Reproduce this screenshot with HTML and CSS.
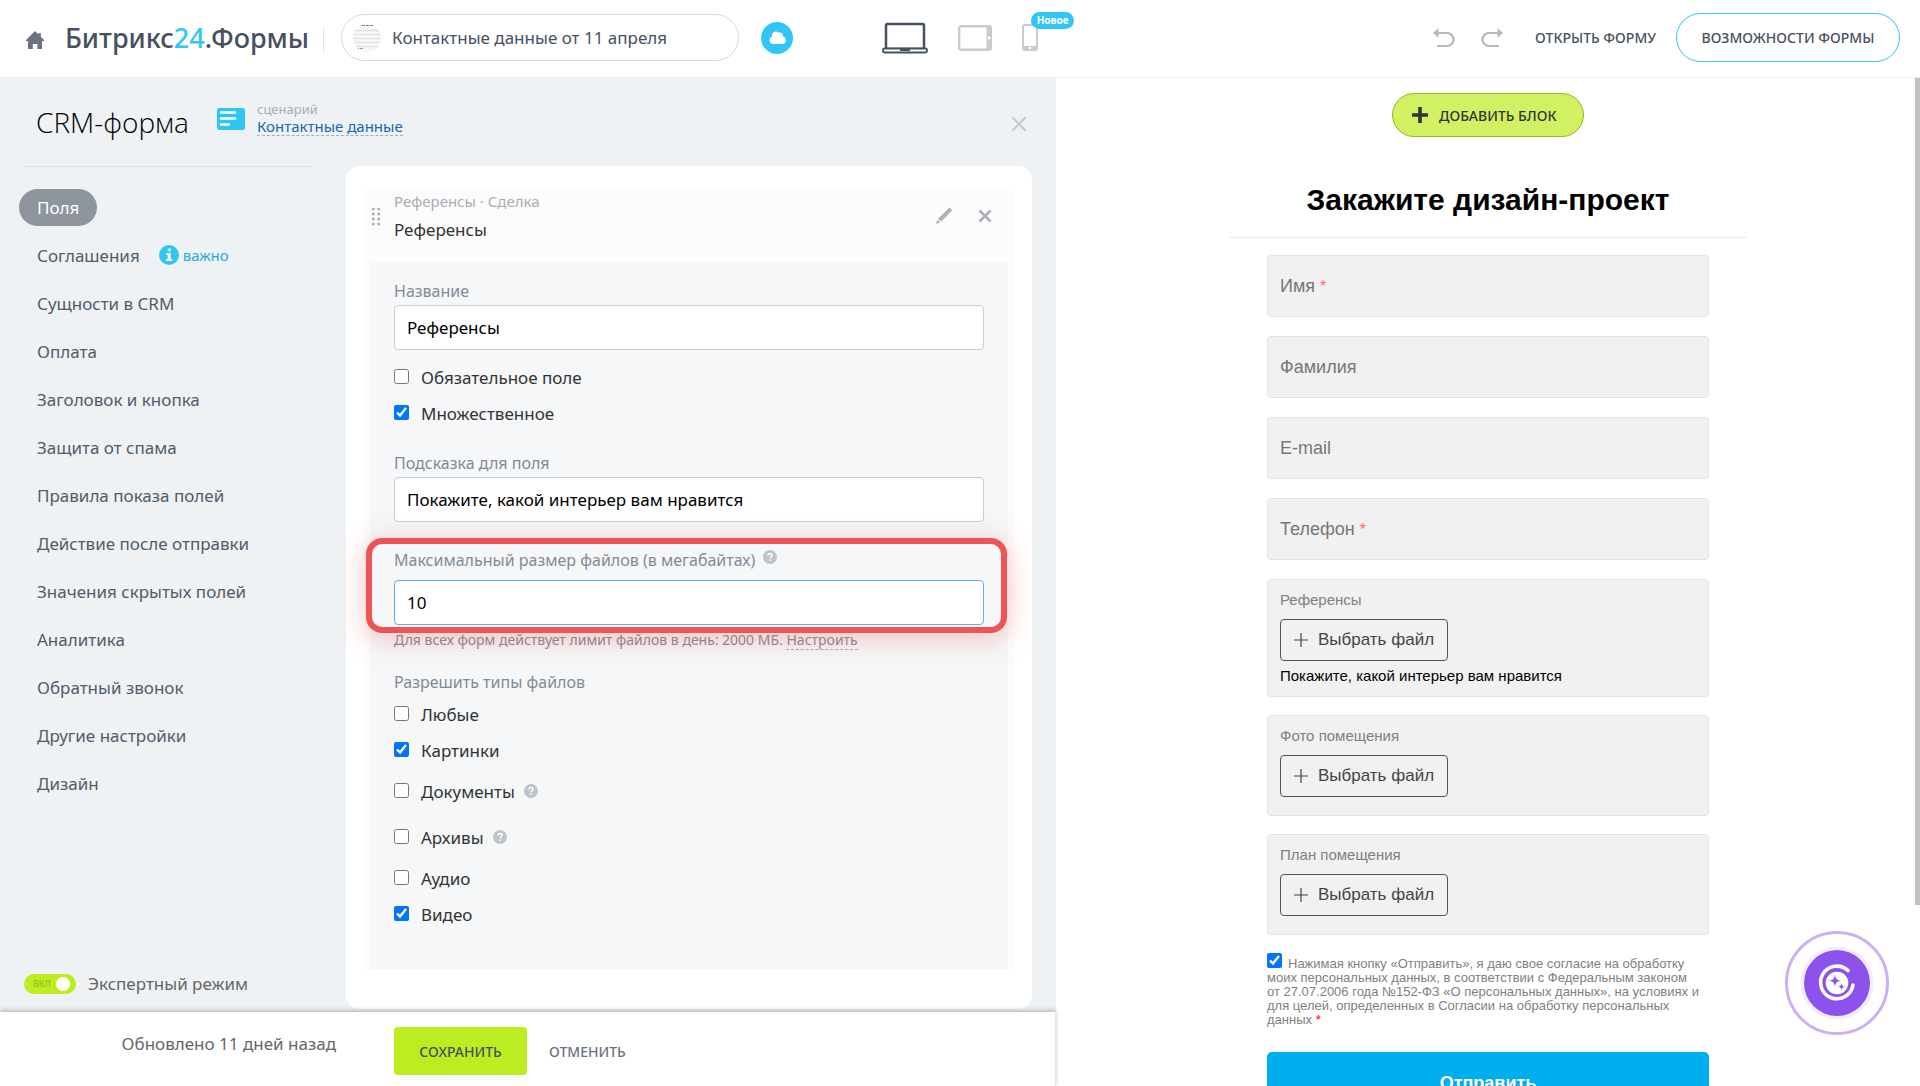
FILE: index.html
```html
<!DOCTYPE html>
<html lang="ru">
<head>
<meta charset="utf-8">
<meta name="viewport" content="width=device-width, initial-scale=1">
<title>Битрикс24.Формы</title>
<link rel="stylesheet" href="styles.css">
</head>
<body>
<svg class="sprite" aria-hidden="true">
  <symbol id="help" viewBox="0 0 14 14">
    <circle cx="7" cy="7" r="7" fill="#bfc4ca"/>
    <path d="M5 5.4c0-1.2.9-2 2.1-2s2 .7 2 1.8c0 1.5-1.9 1.6-1.9 3" fill="none" stroke="#fff" stroke-width="1.5"/>
    <rect x="6.4" y="9.3" width="1.6" height="1.6" fill="#fff"/>
  </symbol>
  <symbol id="plus-thin" viewBox="0 0 14 14">
    <path d="M7 0v14M0 7h14" stroke="#444" stroke-width="1.2"/>
  </symbol>
</svg>

<header class="topbar">
  <a class="home" href="#" aria-label="Главная">
    <svg width="18" height="18" viewBox="0 0 18 18"><path d="M9 0l3.6 3.6V2h2.2v3.7L18 9v1h-2v8h-4.600v-5H6.800v5H2v-8H0V9z" fill="#6a737f"/></svg>
  </a>
  <a class="logo" href="#">Битрикс<span class="logo-num">24</span>.Формы</a>
  <span class="topbar-line"></span>
  <button class="form-name" type="button">
    <svg width="28" height="28" viewBox="0 0 28 28">
      <defs><clipPath id="thumb"><circle cx="14" cy="14" r="14"/></clipPath></defs>
      <g clip-path="url(#thumb)">
        <rect y="3" width="28" height="25" fill="#f7f7f7"/>
        <path d="M0 6.500h28M0 10.500h28M0 14.500h28M0 18.500h28M0 22.500h28" stroke="#e2e2e2" stroke-width="1.500"/>
        <path d="M5 1.500h18" stroke="#777" stroke-dasharray="3 1"/>
        <path d="M3 24.500h8" stroke="#999" stroke-dasharray="3 1"/>
      </g>
    </svg>
    Контактные данные от 11 апреля
  </button>
  <button class="cloud" type="button" aria-label="Сохранено в облаке">
    <svg width="17" height="13" viewBox="0 0 17 13"><path d="M4 13a3.900 3.900 0 0 1-1-7.500C3 2.500 4 .500 6.500.500c1.200 0 2 .500 2.600 1.200 3-1 5 .800 5 3.700A3.900 3.900 0 0 1 13.500 13z" fill="#fff"/></svg>
  </button>

  <div class="devices">
    <button type="button" class="plain" aria-label="Компьютер">
      <svg width="46" height="32" viewBox="0 0 46 32" fill="none" stroke="#465060"><rect x="4" y="2" width="38" height="25" rx="1.500" stroke-width="2.500"/><rect x="1" y="26.500" width="44" height="4" rx="1.500" fill="#fff" stroke-width="1.800"/><path d="M18 28h10" stroke-width="2"/></svg>
    </button>
    <button type="button" class="plain" aria-label="Планшет">
      <svg width="34" height="26" viewBox="0 0 34 26"><rect x="1.200" y="1.200" width="31.600" height="23.600" rx="2" fill="none" stroke="#c7ccd1" stroke-width="2.400"/><rect x="28.500" y="1" width="4.500" height="24" fill="#c7ccd1"/><circle cx="31" cy="13" r="1.500" fill="#fff"/></svg>
    </button>
    <button type="button" class="plain phone" aria-label="Телефон">
      <svg width="16" height="27" viewBox="0 0 16 27"><rect x="1" y="1" width="14" height="25" rx="2" fill="none" stroke="#c7ccd1" stroke-width="2"/><rect x="1" y="22" width="14" height="4" fill="#c7ccd1"/><circle cx="8" cy="24" r="1.300" fill="#fff"/></svg>
      <span class="badge">Новое</span>
    </button>
  </div>

  <div class="actions">
    <button type="button" class="plain" aria-label="Отменить действие">
      <svg width="22" height="20" viewBox="0 0 22 20"><path d="M5 5h9a6.500 6.500 0 0 1 0 13H4" fill="none" stroke="#b4b9c0" stroke-width="2.200"/><path d="M0 5l5.500-5v10z" fill="#b4b9c0"/></svg>
    </button>
    <button type="button" class="plain" aria-label="Повторить действие">
      <svg width="22" height="20" viewBox="0 0 22 20"><path d="M17 5H8a6.500 6.500 0 0 0 0 13h10" fill="none" stroke="#b4b9c0" stroke-width="2.200"/><path d="M22 5l-5.500-5v10z" fill="#b4b9c0"/></svg>
    </button>
    <a class="open-form" href="#">ОТКРЫТЬ ФОРМУ</a>
    <button class="features" type="button">ВОЗМОЖНОСТИ ФОРМЫ</button>
  </div>
</header>

<main class="workspace">
  <section class="editor">
    <div class="editor-body">
      <aside class="sidebar">
        <h1 class="title">CRM-форма</h1>
        <nav>
          <ul class="menu">
            <li><a class="active" href="#">Поля</a></li>
            <li><a href="#">Соглашения</a>
              <span class="important"><svg width="20" height="20" viewBox="0 0 20 20"><circle cx="10" cy="10" r="10" fill="#2fc6f6"/><path d="M8.800 3.500h3v2.800h-3zM7.500 8h4.200v6h1.500v2h-6v-2h1.500v-4H7.500z" fill="#fff"/></svg>важно</span></li>
            <li><a href="#">Сущности в CRM</a></li>
            <li><a href="#">Оплата</a></li>
            <li><a href="#">Заголовок и кнопка</a></li>
            <li><a href="#">Защита от спама</a></li>
            <li><a href="#">Правила показа полей</a></li>
            <li><a href="#">Действие после отправки</a></li>
            <li><a href="#">Значения скрытых полей</a></li>
            <li><a href="#">Аналитика</a></li>
            <li><a href="#">Обратный звонок</a></li>
            <li><a href="#">Другие настройки</a></li>
            <li><a href="#">Дизайн</a></li>
          </ul>
        </nav>
        <label class="expert"><input type="checkbox" class="switch-input" checked><span class="switch">ВКЛ</span>Экспертный режим</label>
      </aside>

      <div class="content">
        <div class="scenario-row">
          <svg class="scenario-icon" width="28" height="22" viewBox="0 0 28 22"><rect width="28" height="22" rx="2.500" fill="#2fc6f6"/><path d="M4 4.500h14M4 10.500h14M4 16.500h8" stroke="#fff" stroke-width="2.400" stroke-linecap="round"/></svg>
          <div class="scenario"><span>сценарий</span><a href="#">Контактные данные</a></div>
          <button type="button" class="plain close" aria-label="Закрыть">
            <svg width="14" height="14" viewBox="0 0 14 14"><path d="M1 1l12 12M13 1L1 13" stroke="#c6cacf" stroke-width="2.200" stroke-linecap="round"/></svg>
          </button>
        </div>

        <div class="card">
          <div class="block">
            <div class="block-head">
              <svg class="grip" width="8" height="18" viewBox="0 0 8 18"><path d="M0 1h8M0 6h8M0 11h8M0 16h8" stroke="#a8adb4" stroke-width="2.400" stroke-dasharray="2.600 2.800"/></svg>
              <div class="block-names"><span>Референсы · Сделка</span><strong>Референсы</strong></div>
              <button type="button" class="plain" aria-label="Изменить">
                <svg width="16" height="16" viewBox="0 0 16 16"><path d="M0 16l1.300-4.300 2.900 2.900zM2 10.700L12.500.600c.800-.800 1.600-.700 2.200-.100l.700.800c.600.700.600 1.300-.100 2L5 13.700z" fill="#aeb3b9"/></svg>
              </button>
              <button type="button" class="plain" aria-label="Удалить">
                <svg width="14" height="14" viewBox="0 0 14 14"><path d="M1.500 1.500l11 11M12.500 1.500l-11 11" stroke="#aeb3b9" stroke-width="2.800"/></svg>
              </button>
            </div>

            <div class="settings">
              <label class="caption" for="f-name">Название</label>
              <input class="text" id="f-name" type="text" value="Референсы">
              <div class="checks checks-main">
                <label class="check"><input type="checkbox">Обязательное поле</label>
                <label class="check"><input type="checkbox" checked>Множественное</label>
              </div>
              <label class="caption caption-hint" for="f-hint">Подсказка для поля</label>
              <input class="text" id="f-hint" type="text" value="Покажите, какой интерьер вам нравится">
              <div class="size-field">
                <label class="caption" for="f-size">Максимальный размер файлов (в мегабайтах) <svg width="14" height="14"><use href="#help"/></svg></label>
                <input class="text text-active" id="f-size" type="text" value="10">
              </div>
              <p class="limit">Для всех форм действует лимит файлов в день: 2000 МБ. <a href="#">Настроить</a></p>
              <div class="caption caption-types">Разрешить типы файлов</div>
              <div class="checks">
                <label class="check"><input type="checkbox">Любые</label>
                <label class="check"><input type="checkbox" checked>Картинки</label>
                <label class="check check-tall"><input type="checkbox">Документы <svg width="14" height="14"><use href="#help"/></svg></label>
                <label class="check check-tall"><input type="checkbox">Архивы <svg width="14" height="14"><use href="#help"/></svg></label>
                <label class="check"><input type="checkbox">Аудио</label>
                <label class="check"><input type="checkbox" checked>Видео</label>
              </div>
            </div>
          </div>
        </div>
      </div>
    </div>

    <footer class="editor-footer">
      <span class="updated">Обновлено 11 дней назад</span>
      <button class="save" type="button">СОХРАНИТЬ</button>
      <button class="cancel" type="button">ОТМЕНИТЬ</button>
    </footer>
  </section>

  <section class="preview">
    <button class="add-block" type="button">
      <svg width="16" height="16" viewBox="0 0 16 16"><path d="M8 0v16M0 8h16" stroke="#333" stroke-width="3.600"/></svg>ДОБАВИТЬ БЛОК
    </button>
    <h2 class="form-title">Закажите дизайн-проект</h2>
    <form class="form">
      <div class="field"><input id="p-name" type="text"><label for="p-name">Имя <i>*</i></label></div>
      <div class="field"><input id="p-last" type="text"><label for="p-last">Фамилия</label></div>
      <div class="field"><input id="p-mail" type="email"><label for="p-mail">E-mail</label></div>
      <div class="field"><input id="p-tel" type="tel"><label for="p-tel">Телефон <i>*</i></label></div>
      <div class="file file-hinted"><span class="file-label">Референсы</span><button type="button"><svg width="14" height="14"><use href="#plus-thin"/></svg>Выбрать файл</button><span class="file-hint">Покажите, какой интерьер вам нравится</span></div>
      <div class="file"><span class="file-label">Фото помещения</span><button type="button"><svg width="14" height="14"><use href="#plus-thin"/></svg>Выбрать файл</button></div>
      <div class="file"><span class="file-label">План помещения</span><button type="button"><svg width="14" height="14"><use href="#plus-thin"/></svg>Выбрать файл</button></div>
      <label class="consent"><input type="checkbox" checked>Нажимая кнопку «Отправить», я даю свое согласие на обработку моих персональных данных, в соответствии с Федеральным законом от 27.07.2006 года №152-ФЗ «О персональных данных», на условиях и для целей, определенных в Согласии на обработку персональных данных <i>*</i></label>
      <button class="submit" type="button">Отправить</button>
    </form>
    <span class="scroll-thumb"></span>
  </section>
</main>

<button class="assistant" type="button" aria-label="Помощник">
  <svg width="104" height="104" viewBox="0 0 104 104">
    <circle cx="52" cy="52" r="50.500" fill="#fff" stroke="#ccb0f7" stroke-width="3"/>
    <circle cx="52" cy="52" r="36.500" fill="#f3ecfd"/>
    <circle cx="52" cy="52" r="33" fill="#8e52ec"/>
    <path d="M63 39.500A16.300 16.300 0 1 0 68 54" fill="none" stroke="#fff" stroke-width="3.600" stroke-linecap="round"/>
    <circle cx="52" cy="52" r="11.300" fill="#fff"/>
    <path d="M50 43.500c.6 4.400 1.800 5.600 6.200 6.200-4.400.6-5.600 1.800-6.200 6.200-.6-4.400-1.800-5.600-6.200-6.200 4.400-.6 5.600-1.800 6.200-6.200z" fill="#8e52ec"/>
    <path d="M56.500 52.200c.4 2.500 1.100 3.200 3.600 3.600-2.500.4-3.200 1.100-3.600 3.600-.4-2.500-1.100-3.200-3.600-3.600 2.500-.4 3.200-1.100 3.600-3.600z" fill="#8e52ec"/>
  </svg>
</button>
</body>
</html>
```
FILE: styles.css
```css
* { box-sizing: border-box; }

body {
  margin: 0;
  height: 100vh;
  display: flex;
  flex-direction: column;
  overflow: hidden;
  background: #fff;
  color: #333;
  font-family: "Noto Sans", "Open Sans", sans-serif;
  font-size: 16px;
}

button, input { font-family: inherit; font-size: inherit; }
button { cursor: pointer; }
svg { display: block; flex: none; }
i { font-style: normal; }
.sprite { position: absolute; width: 0; height: 0; }
.plain { padding: 0; border: 0; background: none; }

/* Top bar */
.topbar {
  flex: none;
  display: flex;
  align-items: center;
  height: 78px;
  padding: 0 20px 2px 26px;
  border-bottom: 1px solid #eef0f2;
}
.home { margin: 4px 21px 0 0; }
.logo {
  color: #465060;
  font-size: 27px;
  font-weight: 500;
  text-decoration: none;
}
.logo-num { color: #2fc6f6; }
.topbar-line { width: 1px; height: 24px; margin: 4px 17px 0 14px; background: #e0e3e6; }
.form-name {
  display: flex;
  align-items: center;
  gap: 11px;
  width: 398px;
  height: 47px;
  padding: 0 11px;
  border: 1px solid #d5d8db;
  border-radius: 24px;
  background: #fff;
  color: #465060;
  font-size: 17px;
}
.cloud {
  display: grid;
  place-items: center;
  width: 32px;
  height: 32px;
  margin-left: 22px;
  padding: 0;
  border: 0;
  border-radius: 50%;
  background: #2fc6f6;
}
.devices { display: flex; align-items: center; gap: 30px; margin-left: 89px; }
.phone { position: relative; }
.badge {
  position: absolute;
  left: 9px;
  top: -12px;
  width: 43px;
  border-radius: 9px;
  background: #2fc6f6;
  color: #fff;
  font-size: 10px;
  font-weight: 700;
  line-height: 17px;
  text-align: center;
}
.actions { display: flex; align-items: center; margin-left: auto; }
.actions .plain { margin-right: 26px; }
.open-form { margin: 0 20px 0 6px; color: #465060; font-size: 14px; font-weight: 500; text-decoration: none; }
.features {
  width: 224px;
  height: 49px;
  border: 1px solid #2fc6f6;
  border-radius: 25px;
  background: #fff;
  color: #465060;
  font-size: 14px;
  font-weight: 500;
}

/* Workspace */
.workspace { flex: 1; min-height: 0; display: grid; grid-template-columns: 55% 45%; }
.editor { display: flex; flex-direction: column; min-height: 0; background: #eef2f5; }
.editor-body { flex: 1; min-height: 0; display: flex; overflow: hidden; }
.sidebar { flex: none; display: flex; flex-direction: column; width: 217px; padding-bottom: 15px; white-space: nowrap; }
.title {
  width: 290px;
  height: 89px;
  margin: 0 0 16px 24px;
  padding: 24px 0 0 12px;
  border-bottom: 1px solid #dfe3e7;
  color: #000;
  font-family: "Open Sans", "Noto Sans", sans-serif;
  font-size: 28px;
  font-weight: 300;
  line-height: 40px;
}
.menu { margin: 0; padding: 0 0 0 19px; list-style: none; }
.menu li { display: flex; align-items: center; height: 48px; }
.menu a {
  padding: 0 18px;
  border-radius: 19px;
  color: #525c69;
  font-size: 17px;
  line-height: 37px;
  text-decoration: none;
}
.menu .active { background: #8e959f; color: #fff; }
.important { display: flex; align-items: center; gap: 4px; margin-left: 1px; color: #1eaee0; font-size: 15px; }
.expert { display: flex; align-items: center; gap: 12px; margin: auto 0 0 24px; color: #666; font-size: 17px; line-height: 26px; }
.switch-input { position: absolute; opacity: 0; }
.switch {
  flex: none;
  display: flex;
  align-items: center;
  justify-content: space-between;
  width: 52px;
  height: 20px;
  padding: 0 6px 0 9px;
  border-radius: 10px;
  background: #bbed21;
  color: #8fb62a;
  font-size: 9px;
  line-height: 20px;
}
.switch::after { content: ""; width: 14px; height: 14px; border-radius: 50%; background: #fff; }

.content { flex: 1; min-width: 0; display: flex; flex-direction: column; padding-right: 24px; }
.scenario-row { flex: none; display: flex; align-items: flex-start; height: 88px; padding-top: 22px; }
.scenario-icon { margin: 8px 12px 0 0; }
.scenario { display: flex; flex-direction: column; align-items: flex-start; }
.scenario span { color: #a8adb4; font-size: 13px; line-height: 18px; }
.scenario a { border-bottom: 1px dashed #8fb0d8; color: #2067b0; font-size: 15px; line-height: 17px; text-decoration: none; }
.close { margin: 17px 6px 0 auto; }

.card { flex: none; margin-left: 129px; padding: 24px 18px 40px; border-radius: 14px; background: #fff; }
.block { padding: 0 6px; background: #fcfcfc; }
.block-head { display: flex; align-items: flex-start; height: 72px; padding-left: 2px; }
.grip { margin: 18px 14px 0 0; }
.block-names { display: flex; flex-direction: column; margin-right: auto; }
.block-names span { color: #a8adb4; font-size: 15px; line-height: 22px; }
.block-names strong { color: #333; font-size: 17px; font-weight: 400; line-height: 36px; }
.block-head .plain { margin-top: 18px; }
.block-head .plain:last-child { margin: 19px 16px 0 26px; }

.settings { padding: 17px 24px 37px; background: #f5f7f8; }
.caption { display: block; padding-bottom: 2px; color: #828b95; font-size: 16px; line-height: 24px; }
.caption-hint { margin-top: 20px; }
.text {
  display: block;
  width: 100%;
  height: 45px;
  padding: 0 12px;
  border: 1px solid #c6cdd3;
  border-radius: 4px;
  background: #fff;
  color: #000;
  font-size: 17px;
}
.text-active { border-color: #66afe9; outline: 0; }
.checks-main { padding-top: 9px; }
.check { display: flex; align-items: center; height: 36px; font-size: 17px; }
.check-tall { height: 46px; }
.check input { width: 15px; height: 15px; margin: 0 12px 2px 0; }
.check svg { margin-left: 9px; }

.size-field { position: relative; margin-top: 26px; }
.size-field .caption { display: flex; padding-bottom: 8px; }
.size-field svg { margin: 2px 0 0 8px; }
.size-field::after {
  content: "";
  position: absolute;
  inset: -10px -23px -8px -28px;
  border: 6px solid #ed5555;
  border-radius: 16px;
  box-shadow: 0 5px 28px rgba(237, 85, 85, 0.35);
  pointer-events: none;
}
.limit { margin: 6px 0 21px; color: #828b95; font-size: 14px; line-height: 18px; }
.limit a { border-bottom: 1px dashed #a8adb4; color: inherit; text-decoration: none; }

.editor-footer {
  position: relative;
  flex: none;
  display: flex;
  align-items: flex-start;
  height: 74px;
  padding-top: 15px;
  border-right: 1px solid #e6e8ea;
  background: #fff;
  box-shadow: 0 -2px 4px rgba(0, 0, 0, 0.22);
}
.updated { width: 336px; margin-right: 58px; padding-top: 4px; color: #666; font-size: 17px; line-height: 26px; text-align: right; }
.save {
  width: 133px;
  height: 48px;
  border: 0;
  border-radius: 4px;
  background: #bbed21;
  color: #465060;
  font-size: 14px;
  font-weight: 500;
}
.cancel { height: 48px; margin-left: 16px; padding: 0 6px; border: 0; background: none; color: #6a737f; font-size: 14px; font-weight: 500; }

/* Form preview */
.preview { position: relative; display: flex; flex-direction: column; align-items: center; min-height: 0; padding-top: 15px; overflow: hidden; font-family: "Liberation Sans", Arial, sans-serif; }
.preview > * { flex: none; }
.add-block {
  display: flex;
  align-items: center;
  gap: 11px;
  width: 192px;
  height: 44px;
  padding: 0 19px;
  border: 1px solid #8fbb1c;
  border-radius: 22px;
  background: #d1f163;
  color: #333;
  font-family: "Noto Sans", "Open Sans", sans-serif;
  font-size: 14px;
  font-weight: 500;
  white-space: nowrap;
}
.form-title {
  width: 518px;
  margin: 45px 0 17px;
  padding-bottom: 19px;
  border-bottom: 1px solid #ececec;
  color: #000;
  font-size: 30px;
  line-height: 36px;
  text-align: center;
}
.form { display: flex; flex-direction: column; gap: 18px; width: 442px; }
.field { display: grid; height: 63px; padding-bottom: 1px; }
.field > * { grid-area: 1 / 1; }
.field input { width: 100%; padding: 0 12px; border: 1px solid #e2e2e2; border-radius: 4px; background: #f1f1f1; }
.field label { align-self: center; justify-self: start; margin-left: 13px; color: #777; font-size: 18px; }
.field i { color: #ff6b6b; font-size: 16px; }
.file {
  display: flex;
  flex-direction: column;
  align-items: flex-start;
  padding: 10px 12px 18px;
  border: 1px solid #e2e2e2;
  border-radius: 4px;
  background: #f1f1f1;
}
.file-hinted { padding-bottom: 10px; }
.file-label { color: #808080; font-size: 15px; line-height: 20px; }
.file button {
  display: flex;
  align-items: center;
  gap: 10px;
  height: 42px;
  margin-top: 9px;
  padding: 0 13px;
  border: 1px solid #555;
  border-radius: 4px;
  background: none;
  color: #444;
  font-size: 17px;
}
.file-hint { margin-top: 5px; color: #000; font-size: 15px; line-height: 20px; }
.consent { display: block; padding-right: 10px; color: #808080; font-size: 13px; line-height: 14px; }
.consent input { width: 15px; height: 15px; margin: 0 6px 0 0; }
.consent i { color: #f00; }
.submit { height: 62px; margin-top: 7px; border: 0; border-radius: 5px; background: #00aeef; color: #fff; font-size: 18px; font-weight: 700; }
.scroll-thumb { position: absolute; top: 0; right: 0; width: 5px; height: 82%; background: #c1c1c1; }

.assistant { position: fixed; right: 31px; bottom: 51px; padding: 0; border: 0; border-radius: 50%; background: none; }
```
